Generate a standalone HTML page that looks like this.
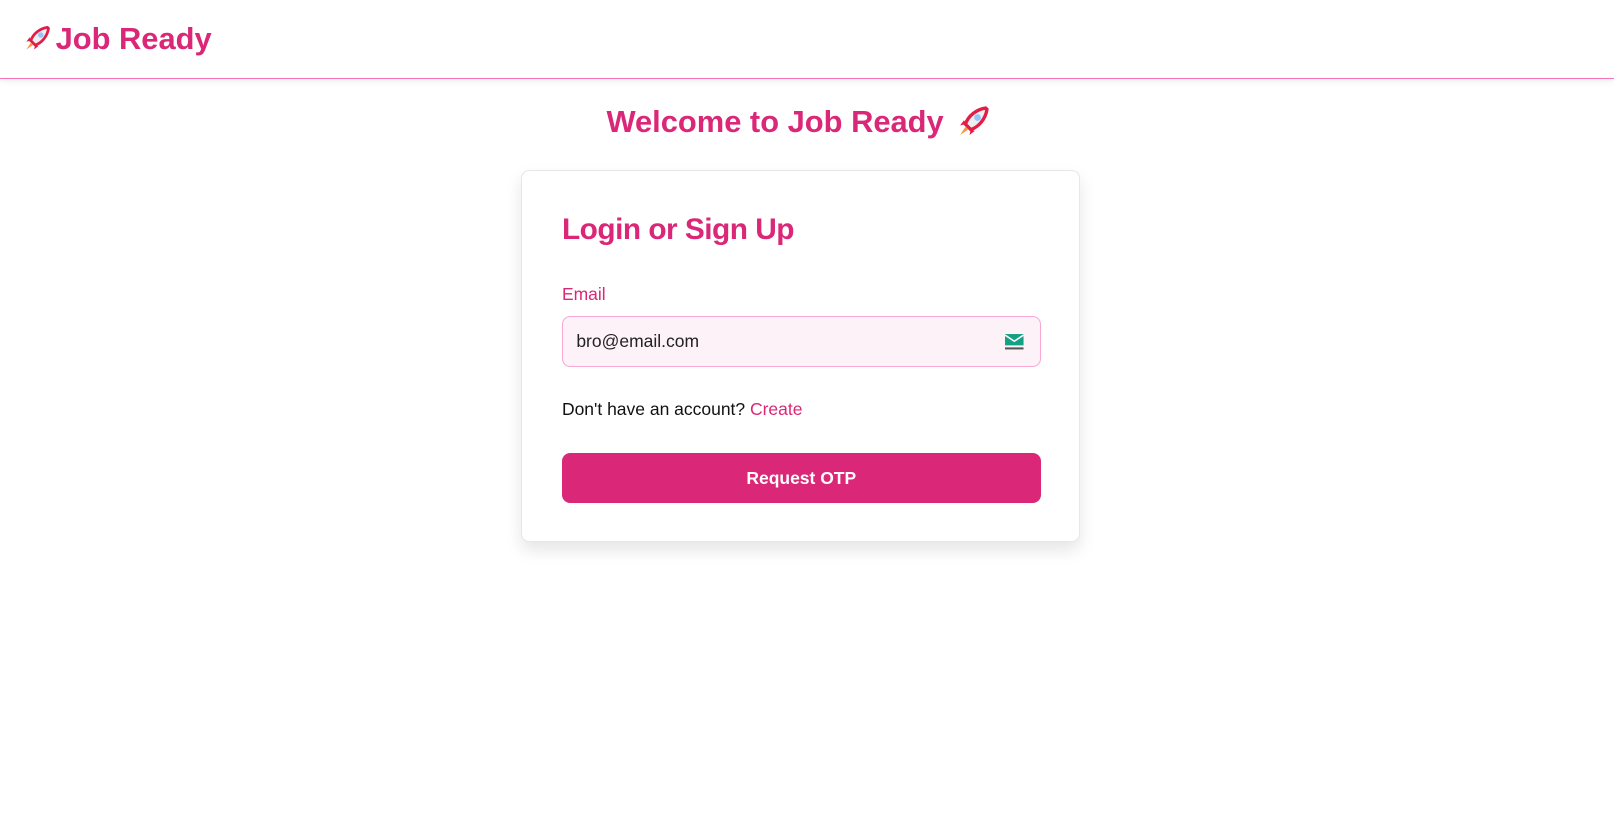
<!DOCTYPE html>
<html><head><meta charset="utf-8"><style>
*{box-sizing:border-box;margin:0;padding:0}
html{zoom:1.0293}
body{width:1568px;height:795px;background:#fff;font-family:"Liberation Sans",sans-serif;position:relative;overflow:hidden}
.hdr{height:77px;border-bottom:1px solid #f472b6;box-shadow:0 2px 6px rgba(0,0,0,.08);position:relative}
.logo{position:absolute;left:22px;top:20px;font-size:30px;font-weight:bold;color:#db2777;display:flex;align-items:center;gap:4px}
h1{position:absolute;top:101px;left:0;width:1552px;text-align:center;font-size:30px;font-weight:bold;color:#db2777;display:flex;justify-content:center;align-items:center;gap:12px}
.card{position:absolute;left:506px;top:165px;width:543px;height:362px;border:1px solid #e5e7eb;border-radius:8px;box-shadow:0 8px 16px rgba(0,0,0,.1);background:#fff}
.t{position:absolute;left:39px;top:41px;font-size:29px;font-weight:bold;color:#db2777;letter-spacing:-.5px}
.lbl{position:absolute;left:39px;top:110px;font-size:17px;color:#db2777}
.inp{position:absolute;left:39px;top:141px;width:465px;height:50px;border:1px solid #f9a8d4;border-radius:8px;background:#fdf2f8;font-size:17px;color:#222;padding:14px 13px}
.ico{position:absolute;right:15px;top:16px;width:20px;height:17px}
.acc{position:absolute;left:39px;top:222px;font-size:17px;color:#111}
.acc span{color:#db2777}
.btn{position:absolute;left:39px;top:274px;width:465px;height:49px;background:#db2777;border-radius:8px;color:#fff;font-size:17px;font-weight:bold;text-align:center;line-height:49px}
</style></head><body>
<div class="hdr"><div class="logo">
<svg width="28" height="28" viewBox="0 0 26 26"><path d="M22 3 C15 4 9 9 7 15 L11 19 C17 17 22 11 23 4Z" fill="#eee" stroke="#e11d48" stroke-width="2.5"/><circle cx="16" cy="10" r="2.5" fill="#93c5fd"/><path d="M7 15 L3 16 L6 12Z M11 19 L10 23 L14 20Z" fill="#e11d48"/><path d="M7 17 L3 23 L9 19Z" fill="#fb923c"/></svg>Job Ready</div></div>
<h1>Welcome to Job Ready <svg width="34" height="34" viewBox="0 0 26 26"><path d="M22 3 C15 4 9 9 7 15 L11 19 C17 17 22 11 23 4Z" fill="#eee" stroke="#e11d48" stroke-width="2.5"/><circle cx="16" cy="10" r="2.5" fill="#93c5fd"/><path d="M7 15 L3 16 L6 12Z M11 19 L10 23 L14 20Z" fill="#e11d48"/><path d="M7 17 L3 23 L9 19Z" fill="#fb923c"/></svg></h1>
<div class="card">
<div class="t">Login or Sign Up</div>
<div class="lbl">Email</div>
<div class="inp">bro@email.com<svg class="ico" viewBox="0 0 20 17"><rect x="1" y="1" width="18" height="11" fill="#14a085"/><path d="M1 2 L10 8 L19 2" stroke="#fff" stroke-width="1.5" fill="none"/><rect x="1" y="14" width="18" height="2" fill="#555"/></svg></div>
<div class="acc">Don't have an account? <span>Create</span></div>
<div class="btn">Request OTP</div>
</div>
</body></html>
